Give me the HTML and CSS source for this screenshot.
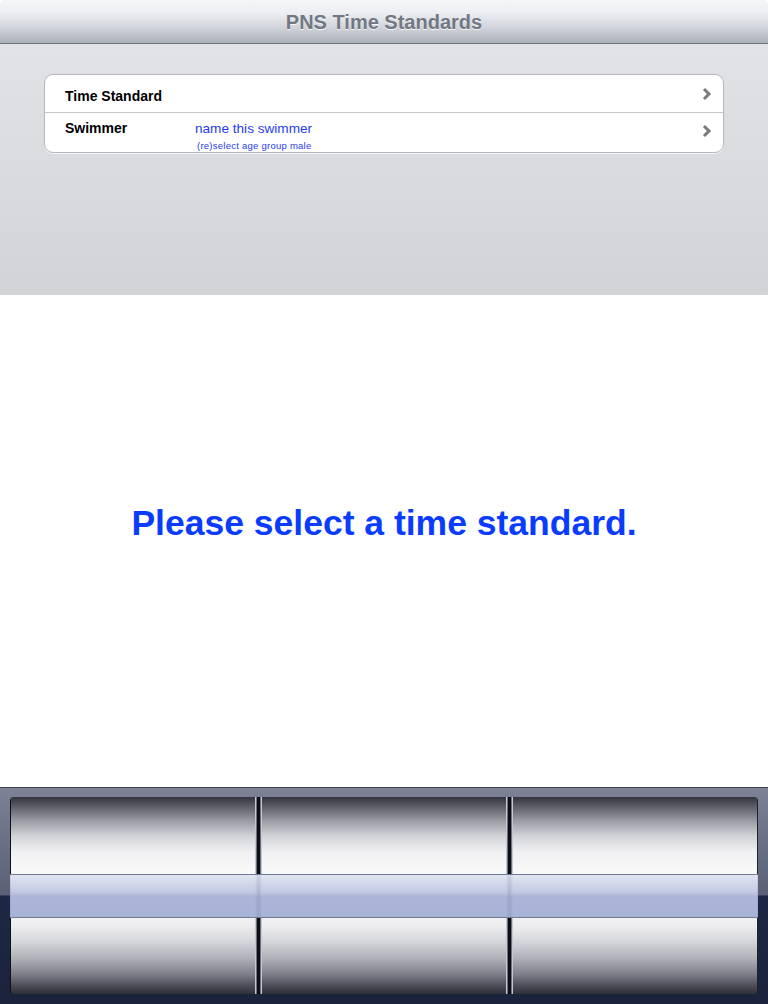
FILE: index.html
```html
<!DOCTYPE html>
<html>
<head>
<meta charset="utf-8">
<link rel="stylesheet" href="styles.css">
</head>
<body>
<div class="app">
  <header class="navbar"><h1 class="title">PNS Time Standards</h1></header>
  <section class="panel">
    <div class="table">
      <div class="row row-first">
        <span class="label">Time Standard</span>
        <span class="values"></span>
        <svg class="chev" width="10" height="14" viewBox="0 0 10 14"><path d="M2 2 L7 7 L2 12" fill="none" stroke="#7a7a7a" stroke-width="3"/></svg>
      </div>
      <div class="row">
        <span class="label">Swimmer</span>
        <span class="values">
          <span class="value-main">name this swimmer</span>
          <span class="value-sub">(re)select age group male</span>
        </span>
        <svg class="chev" width="10" height="14" viewBox="0 0 10 14"><path d="M2 2 L7 7 L2 12" fill="none" stroke="#7a7a7a" stroke-width="3"/></svg>
      </div>
    </div>
  </section>
  <main class="content">
    <p class="message">Please select a time standard.</p>
  </main>
  <footer class="picker">
    <div class="wheels">
      <div class="wheel wheel-left"></div>
      <div class="divider"></div>
      <div class="wheel"></div>
      <div class="divider"></div>
      <div class="wheel wheel-right"></div>
    </div>
    <div class="band"></div>
  </footer>
</div>
</body>
</html>
```
FILE: styles.css
```css
* { box-sizing: border-box; }
html, body { margin: 0; padding: 0; }
body {
  width: 768px;
  height: 1004px;
  overflow: hidden;
  font-family: "Liberation Sans", Arial, sans-serif;
  background: #fff;
}
.app {
  display: flex;
  flex-direction: column;
  height: 1004px;
}
.navbar {
  height: 44px;
  flex: none;
  background: linear-gradient(to bottom, #f5f6f8 0%, #eceef1 30%, #d0d3d9 65%, #abafb9 100%);
  border-bottom: 1px solid #6b7181;
  border-radius: 5px 5px 0 0;
  display: flex;
  align-items: center;
  justify-content: center;
}
.title {
  margin: 0;
  font-size: 20px;
  font-weight: bold;
  color: #717884;
  text-shadow: 0 1px 0 rgba(255,255,255,0.8);
  padding-top: 1px;
}
.panel {
  height: 251px;
  flex: none;
  background: linear-gradient(to bottom, #e1e3e7, #d1d3d7);
  padding: 30px 44px 0 44px;
}
.table {
  width: 680px;
  background: #fff;
  border: 1px solid #b4b6ba;
  border-radius: 9px;
  box-shadow: 0 1px 0 rgba(255,255,255,0.7);
}
.row {
  height: 39px;
  display: flex;
  align-items: flex-start;
  padding: 0 10px 0 20px;
  position: relative;
}
.row-first {
  height: 38px;
  border-bottom: 1px solid #c8c9cc;
}
.label {
  width: 130px;
  flex: none;
  font-size: 14px;
  font-weight: bold;
  color: #000;
  padding-top: 13px;
}
.row + .row .label { padding-top: 7px; }
.values {
  flex: 1;
  display: flex;
  flex-direction: column;
  padding-top: 8px;
}
.value-main {
  font-size: 13.6px;
  color: #1f3bf0;
  line-height: 16px;
}
.value-sub {
  font-size: 9.5px;
  letter-spacing: 0.25px;
  color: #1f3bf0;
  margin-top: 3px;
  padding-left: 2px;
}
.chev {
  flex: none;
  margin-top: 12px;
  margin-right: 1px;
}
.row + .row .chev { margin-top: 11px; }
.content {
  flex: 1;
  background: #fff;
  display: flex;
  justify-content: center;
  padding-top: 208px;
}
.message {
  margin: 0;
  font-size: 35.5px;
  font-weight: bold;
  color: #0a3cff;
  line-height: 40px;
}
.picker {
  height: 217px;
  flex: none;
  position: relative;
  border-top: 1px solid #3d4252;
  background: linear-gradient(to bottom, #7d8395 0%, #6a7084 25%, #5b6176 49.5%, #1e2844 50%, #1b233c 100%);
  padding: 9px 10px 10px 10px;
}
.wheels {
  display: flex;
  height: 197px;
  border-left: 1px solid #111;
  border-right: 1px solid #222;
  border-radius: 4px;
  overflow: hidden;
}
.wheel {
  flex: 1;
  background: linear-gradient(to bottom,
    #33343d 0%, #5d5e68 5%, #9a9ba3 12%, #d3d4d8 20%, #f1f1f3 28%, #fafafa 40%,
    #f8f8f9 55%, #eeeef0 65%, #d7d8dc 73%, #afb0b8 82%, #7d7e89 90%, #4a4b56 96%, #2e2f38 100%);
}
.divider {
  width: 7px;
  flex: none;
  background: linear-gradient(to right, #c4c7d6 0px, #c4c7d6 1px, #6e7184 1px, #6e7184 2px, #0e0f14 2px, #0e0f14 5px, #6e7184 5px, #6e7184 6px, #c4c7d6 6px);
}
.band {
  position: absolute;
  left: 10px;
  right: 10px;
  top: 86px;
  height: 44px;
  border-top: 1px solid #6f7b92;
  border-bottom: 1px solid #6f7b92;
  background: linear-gradient(to bottom, rgba(223,227,240,0.92) 0%, rgba(190,199,226,0.92) 40%, rgba(168,178,214,0.95) 50%, rgba(164,175,213,0.95) 100%);
}
```
